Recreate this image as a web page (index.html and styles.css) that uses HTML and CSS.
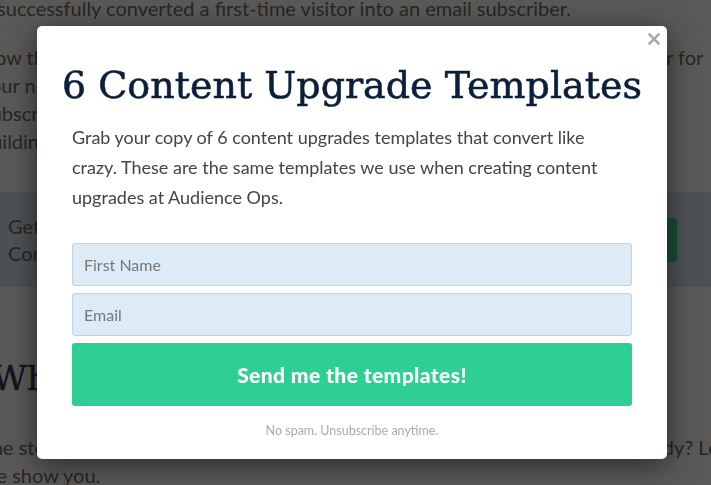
FILE: index.html
```html
<!DOCTYPE html>
<html lang="en">
<head>
    <meta charset="UTF-8">
    <meta name="viewport" content="width=device-width, initial-scale=1.0">
    <title>Content Upgrade Templates</title>
    <link rel="stylesheet" href="styles.css">
</head>
<body>

<div class="page">
    <article class="post">
        <p>it successfully converted a first-time visitor into an email subscriber.</p>
        <p>How this works is simple. You write a post that is very useful, and make an offer for<br>
            your newsletter readers to grab a bonus.<br>
            Subscribers get the free templates, and it is our favourite way of<br>
            building a list.</p>
    </article>
    <aside class="cta-bar">
        <p>Get our 6 content upgrade templates for free.<br>Content upgrades that convert like crazy.</p>
        <a href="#" class="cta-button">Get the templates</a>
    </aside>
    <article class="post">
        <h2>What makes a great content upgrade?</h2>
        <p>The stories above sound good, but how do you build one when you're fully ready? Let<br>
            me show you.</p>
    </article>
</div>

<div class="overlay">
    <div class="modal">
        <button class="close-button" aria-label="Close">
            <svg width="12" height="12" viewBox="0 0 12 12"><path d="M1.5 1.5 L10.5 10.5 M10.5 1.5 L1.5 10.5" stroke="#aaa" stroke-width="2.6" stroke-linecap="square"/></svg>
        </button>
        <h1>6 Content Upgrade Templates</h1>
        <p class="intro">Grab your copy of 6 content upgrades templates that convert like crazy. These are the same templates we use when creating content upgrades at Audience Ops.</p>
        <form class="signup" onsubmit="return false;">
            <input type="text" placeholder="First Name">
            <input type="email" placeholder="Email">
            <button type="submit">Send me the templates!</button>
        </form>
        <p class="note">No spam. Unsubscribe anytime.</p>
    </div>
</div>

</body>
</html>
```

FILE: styles.css
```css
body {
    margin: 0;
    height: 485px;
    overflow: hidden;
    font-family: Lato, "Open Sans", sans-serif;
    background-color: #fff;
}
.page {
    width: 760px;
    margin: -6px 0 0 -20px;
}
.post p {
    margin: 0 0 21px;
    font-size: 20px;
    line-height: 28px;
    color: #555;
    white-space: nowrap;
}
.post h2 {
    margin: 69px 0 33px 12px;
    font-family: "DejaVu Serif", serif;
    font-weight: normal;
    font-size: 34px;
    line-height: 44px;
    color: #0b1f3a;
    -webkit-text-stroke: 0.5px #0b1f3a;
    white-space: nowrap;
}
.cta-bar {
    display: flex;
    justify-content: space-between;
    align-items: center;
    margin-top: 37px;
    padding: 21px 63px 20px 28px;
    background-color: #d5e4f6;
}
.cta-bar p {
    margin: 0;
    font-size: 20px;
    line-height: 27px;
    color: #555;
}
.cta-button {
    padding: 0 30px;
    line-height: 44px;
    background-color: #2ecf93;
    color: #fff;
    border-radius: 4px;
    text-decoration: none;
    font-weight: bold;
}
.overlay {
    position: fixed;
    top: 0;
    left: 0;
    right: 0;
    bottom: 0;
    display: flex;
    align-items: flex-start;
    padding: 26px 0 0 37px;
    background-color: rgba(20, 18, 16, 0.7);
}
.modal {
    position: relative;
    width: 630px;
    box-sizing: border-box;
    padding: 36px 35px 20px;
    background-color: #fff;
    border-radius: 5px;
    box-shadow: 0 6px 30px rgba(0,0,0,0.55);
}
.close-button {
    position: absolute;
    top: 7px;
    right: 7px;
    padding: 0;
    width: 12px;
    height: 12px;
    border: none;
    background: none;
    cursor: pointer;
    display: flex;
}
.modal h1 {
    margin: 0 -20px 14px;
    text-align: center;
    font-family: "DejaVu Serif", serif;
    font-weight: normal;
    font-size: 38px;
    line-height: 46px;
    color: #0b1f3a;
    -webkit-text-stroke: 0.6px #0b1f3a;
}
.intro {
    margin: 0 0 31px;
    font-size: 18px;
    line-height: 30px;
    color: #444;
}
.signup {
    display: flex;
    flex-direction: column;
    gap: 7px;
}
.signup input {
    height: 43px;
    box-sizing: border-box;
    padding: 0 11px;
    background-color: #dcebf6;
    border: 1px solid #c4d3de;
    border-radius: 3px;
    font-family: inherit;
    font-size: 16px;
    color: #333;
}
.signup input::placeholder {
    color: #777;
}
.signup button {
    height: 63px;
    border: none;
    border-radius: 3px;
    background-color: #2ecf93;
    color: #fff;
    font-family: inherit;
    font-weight: 900;
    font-size: 21px;
    letter-spacing: 0.4px;
    cursor: pointer;
}
.note {
    margin: 17px 0 0;
    text-align: center;
    font-size: 12.5px;
    line-height: 16px;
    color: #aaa;
}
```
